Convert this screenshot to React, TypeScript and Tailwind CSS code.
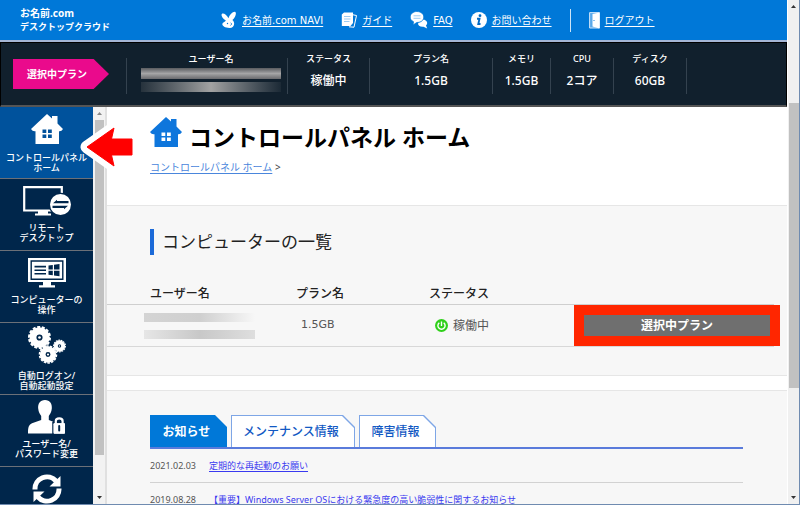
import { useState } from 'react'
import type { ReactNode } from 'react'
import clsx from 'clsx'

type IconProps = { className?: string }

function HouseIcon({ className }: IconProps) {
  return (
    <svg viewBox="0 0 32 30" className={className} fill="currentColor" aria-hidden="true">
      <path
        fillRule="evenodd"
        d="M16 0 L21 4.6 V2 H26.5 V9.6 L32 15 Q30.5 17.6 28 17.2 V30 H4.5 V17.2 Q1.5 17.6 0 15 Z M11.5 15.5 V19 H15.3 V15.5 Z M17 15.5 V19 H20.8 V15.5 Z M11.5 20.6 V24 H15.3 V20.6 Z M17 20.6 V24 H20.8 V20.6 Z"
      />
    </svg>
  )
}

function RemoteIcon() {
  return (
    <svg viewBox="0 0 48 30" className="h-[30px] w-12" aria-hidden="true">
      <path d="M1.2 1.2 H38.8 V24.5 H1.2 Z" fill="none" stroke="#fff" strokeWidth="2.2" />
      <path d="M15 25 H25 V27.5 H28 V29.5 H12 V27.5 H15 Z" fill="#fff" />
      <circle cx="37.5" cy="18.5" r="11.8" fill="#00264b" />
      <circle cx="37.5" cy="18.5" r="10.5" fill="#fff" />
      <path d="M30 17.3 L34 13.8 V15 H45.5 V17.3 Z M45 19.8 L41 23.3 V22.1 H29.5 V19.8 Z" fill="#00264b" />
    </svg>
  )
}

function ComputerIcon() {
  return (
    <svg viewBox="0 0 38 30" className="h-[30px] w-[38px]" aria-hidden="true">
      <path d="M0 0 H38 V24 H0 Z" fill="#fff" />
      <path d="M3.2 3 H34.8 V21.2 H3.2 Z" fill="none" stroke="#00264b" strokeWidth="1.4" />
      <path d="M6.5 8.6 H18 M6.5 12.2 H18 M6.5 15.8 H18" stroke="#00264b" strokeWidth="1.6" />
      <path
        d="M20.5 7.6 L24.8 7 V11.6 H20.5 Z M26 6.8 L31.5 6 V11.6 H26 Z M20.5 12.8 H24.8 V17.3 L20.5 16.7 Z M26 12.8 H31.5 V18.2 L26 17.4 Z"
        fill="#00264b"
      />
      <path d="M15 24 H23 V27.3 H27 V29.5 H11 V27.3 H15 Z" fill="#fff" />
    </svg>
  )
}

function Gear({ x, y, r }: { x: number; y: number; r: number }) {
  return (
    <g>
      <circle cx={x} cy={y} r={r * 0.58} fill="none" stroke="#fff" strokeWidth={r * 0.62} />
      <circle
        cx={x}
        cy={y}
        r={r * 0.92}
        fill="none"
        stroke="#fff"
        strokeWidth={r * 0.18}
        pathLength={28}
        strokeDasharray="1.3 0.7"
      />
      <circle cx={x} cy={y} r={r * 0.12} fill="#fff" />
    </g>
  )
}

function GearsIcon() {
  return (
    <svg viewBox="0 0 38 38" className="h-[38px] w-[38px]" aria-hidden="true">
      <Gear x={11.5} y={11.5} r={11.4} />
      <Gear x={20} y={28.5} r={9.2} />
      <Gear x={31.5} y={20} r={6.4} />
    </svg>
  )
}

function UserLockIcon() {
  return (
    <svg viewBox="0 0 38 34" className="h-[34px] w-[38px]" aria-hidden="true">
      <path
        d="M17 0 C22 0 24.3 4 23.8 8.6 C23.5 12 22 14.5 20.8 16 V20 L29 23.3 C32.5 24.8 33 28 33 33.5 H0 C0 28 .5 24.8 4 23.3 L13.2 20 V16 C12 14.5 10.5 12 10.2 8.6 C9.7 4 12 0 17 0 Z"
        fill="#fff"
      />
      <rect x="25" y="22.5" width="12.5" height="12" fill="#fff" stroke="#00264b" strokeWidth="1.5" />
      <path d="M27.8 23 V20 Q31.2 15.5 34.6 20 V23" fill="none" stroke="#00264b" strokeWidth="5" />
      <path d="M27.8 24 V21 C27.8 17.5 34.6 17.5 34.6 21 V24" fill="none" stroke="#fff" strokeWidth="2.2" />
      <rect x="25.5" y="23.2" width="11.5" height="10.3" rx="1" fill="#fff" />
      <path d="M31.2 26 V30.5" stroke="#00264b" strokeWidth="2" strokeLinecap="round" />
    </svg>
  )
}

function RefreshIcon() {
  return (
    <svg viewBox="0 0 30 30" className="h-[30px] w-[30px]" fill="none" aria-hidden="true">
      <path d="M3 15.5 A12 12 0 0 1 24 7" stroke="#fff" strokeWidth="5" />
      <path d="M27 14.5 A12 12 0 0 1 6 23" stroke="#fff" strokeWidth="5" />
      <path d="M28.5 2 V12.5 H17.5 Z M1.5 28 V17.5 H12.5 Z" fill="#fff" />
    </svg>
  )
}

function RabbitIcon() {
  return (
    <svg viewBox="0 0 16 18" className="h-[18px] w-4" aria-hidden="true">
      <path
        d="M.8 3 C2.5 1.6 5.5 4 7.5 7.2 C8.5 4 11.5 .6 14 .8 C15.8 1.4 14.8 6.5 11.4 9 C14.5 11.5 13.5 16.8 8.500 17 C4 17 1.200 15 1.300 13 C1.500 11.500 3.800 11.300 5 9.600 C2.800 8.500 -.4 5 .8 3 Z"
        fill="#fff"
      />
      <circle cx="6.5" cy="12.5" r=".7" fill="#0078d8" />
      <path d="M9.5 11.8 L11 13 L9.2 14.500" fill="none" stroke="#0078d8" strokeWidth=".7" />
    </svg>
  )
}

function GuideIcon() {
  return (
    <svg viewBox="0 0 16 16" className="h-4 w-4" aria-hidden="true">
      <path d="M10.5 2.5 L15.5 3.5 L13 15.2 L8 14.8" fill="none" stroke="#fff" strokeWidth="1" />
      <path d="M3 .5 H12 V11 L9.5 14 H.8 V2.5 Z" fill="#fff" />
      <path d="M3 4.5 H9.5 M3 7 H9.5 M3 9.5 H8.5" stroke="#9ccbf3" strokeWidth="1" />
    </svg>
  )
}

function ChatIcon() {
  return (
    <svg viewBox="0 0 18 18" className="h-[18px] w-[18px]" aria-hidden="true">
      <path
        d="M12.5 8.5 C17 8.5 18.5 12.5 16 14.500 L17.2 17.5 L13.5 15.8 C10 16.2 8 14.5 8 12.5 Z"
        fill="#fff"
      />
      <path
        d="M6.8 .5 C11 .5 13.8 3 13.8 6 C13.8 9.3 11 11.5 6.8 11.5 L3 14 L3.5 10.7 C1.3 9.8 .2 8 .2 6 C.2 3 3 .5 6.8 .5 Z"
        fill="#fff"
        stroke="#0078d8"
        strokeWidth=".8"
      />
      <path d="M3.5 4.8 H10.5 M3.5 7.3 H10.5" stroke="#9ccbf3" strokeWidth="1" />
    </svg>
  )
}

function InfoIcon() {
  return (
    <svg viewBox="0 0 16 16" className="h-4 w-4" aria-hidden="true">
      <circle cx="8" cy="8" r="8" fill="#fff" />
      <circle cx="9" cy="3.7" r="1.4" fill="#0069c4" />
      <path d="M6 6.7 H8.5 L7.3 12 H9.5" fill="none" stroke="#0069c4" strokeWidth="1.9" />
    </svg>
  )
}

function DoorIcon() {
  return (
    <svg viewBox="0 0 11 17" className="h-[17px] w-[11px]" aria-hidden="true">
      <path d="M.6 .6 H10.4 V16 H.6 Z" fill="#5aa9ea" stroke="#cfe5fa" strokeWidth="1" />
      <path d="M3.5 2 L10.5 .6 V16.4 L3.5 14.500 Z" fill="#fff" />
      <circle cx="5" cy="8.5" r=".6" fill="#0078d8" />
    </svg>
  )
}

function PowerIcon() {
  return (
    <svg viewBox="0 0 13 13" className="h-[13px] w-[13px]" fill="none" aria-hidden="true">
      <circle cx="6.5" cy="6.5" r="6.5" fill="#2fd01a" />
      <path d="M4.3 3.8 A3.6 3.6 0 1 0 8.7 3.8 M6.5 2.5 V7" stroke="#fff" strokeWidth="1.4" />
    </svg>
  )
}

function PointerArrow() {
  return (
    <svg viewBox="0 0 58 54" className="absolute left-[78px] top-3 h-[54px] w-[58px]" aria-hidden="true">
      <path
        d="M9 28 L36 9 L33.5 20 H54 V36 H33.5 L36 47 Z"
        fill="#fff"
        stroke="#fff"
        strokeWidth="13"
        strokeLinejoin="round"
      />
      <path
        d="M9 28 L36 9 L33.5 20 H54 V36 H33.5 L36 47 Z"
        fill="#f00"
        stroke="#f00"
        strokeWidth="1"
        strokeLinejoin="round"
      />
    </svg>
  )
}

function ScrollArrow({ down, className }: { down?: boolean; className?: string }) {
  return (
    <svg viewBox="0 0 5 3" className={clsx('h-[3px] w-[5px] shrink-0', className)} fill="currentColor" aria-hidden="true">
      <path d={down ? 'M0 0 H5 L2.5 3 Z' : 'M0 3 H5 L2.5 0 Z'} />
    </svg>
  )
}

const headerLinks: { label: string; icon: ReactNode }[] = [
  { label: 'お名前.com NAVI', icon: <RabbitIcon /> },
  { label: 'ガイド', icon: <GuideIcon /> },
  { label: 'FAQ', icon: <ChatIcon /> },
  { label: 'お問い合わせ', icon: <InfoIcon /> },
]

const planStats = [
  { label: 'ステータス', value: '稼働中', width: 'w-[82px]' },
  { label: 'プラン名', value: '1.5GB', width: 'w-[123px]' },
  { label: 'メモリ', value: '1.5GB', width: 'w-[58px]' },
  { label: 'CPU', value: '2コア', width: 'w-[63px]' },
  { label: 'ディスク', value: '60GB', width: 'w-[73px]' },
]

const menu: { lines: [string, string]; icon: ReactNode; padding: string }[] = [
  {
    lines: ['コントロールパネル', 'ホーム'],
    icon: <HouseIcon className="h-[30px] w-8 text-white" />,
    padding: 'pt-[7px] pb-[5px]',
  },
  { lines: ['リモート', 'デスクトップ'], icon: <RemoteIcon />, padding: 'pt-[7px] pb-[7px]' },
  { lines: ['コンピューターの', '操作'], icon: <ComputerIcon />, padding: 'pt-[7px] pb-[7px]' },
  { lines: ['自動ログオン/', '自動起動設定'], icon: <GearsIcon />, padding: 'pt-[3px] pb-[3px]' },
  { lines: ['ユーザー名/', 'パスワード変更'], icon: <UserLockIcon />, padding: 'pt-[5px] pb-[7px]' },
]

const tabs = [
  { label: 'お知らせ', width: 'w-[77px]' },
  { label: 'メンテナンス情報', width: 'w-[124px]' },
  { label: '障害情報', width: 'w-[77px]' },
]

const news = [
  { date: '2021.02.03', title: '定期的な再起動のお願い' },
  { date: '2019.08.28', title: '【重要】Windows Server OSにおける緊急度の高い脆弱性に関するお知らせ' },
]

function Header() {
  return (
    <header className="flex h-[42px] shrink-0 items-center border-b-2 border-[#a5b6d6] bg-[#0078d8] pl-5 text-white">
      <div className="w-[201px] shrink-0 font-bold">
        <div className="text-[10px] leading-[13px]">お名前.com</div>
        <div className="text-[9px] leading-[13px]">デスクトップクラウド</div>
      </div>
      <nav className="flex items-center gap-[18px] whitespace-nowrap font-['DejaVu_Sans','Noto_Sans_CJK_JP',sans-serif] text-[10px]">
        {headerLinks.map(link => (
          <a key={link.label} href="#" className="flex items-center gap-[5px]">
            {link.icon}
            <span className="underline underline-offset-2">{link.label}</span>
          </a>
        ))}
        <span className="h-[23px] w-px bg-white/80" />
        <a href="#" className="flex items-center gap-[5px]">
          <DoorIcon />
          <span className="underline underline-offset-2">ログアウト</span>
        </a>
      </nav>
    </header>
  )
}

function PlanBar() {
  return (
    <div className="flex h-[65px] shrink-0 items-start border border-b-2 border-black border-b-[#555] bg-[#11202d] text-white">
      <div className="ml-3 mt-4 flex h-[30px] w-24 shrink-0 items-center bg-[#ea0a8c] pl-[14px] text-[10px] font-bold [clip-path:polygon(0_0,84%_0,100%_50%,84%_100%,0_100%)]">
        選択中プラン
      </div>
      <dl className="ml-[17px] flex text-center">
        <div className="flex w-[161px]">
          <span className="mt-[15px] h-9 w-px shrink-0 bg-[#34424f]" />
          <div className="flex-1 pl-[14px] pr-[6px]">
            <dt className="pt-2 text-[9px] font-medium leading-4">ユーザー名</dt>
            <dd className="mt-px flex flex-col gap-[3px]">
              <span className="h-[11px] bg-linear-to-b from-[#5a5c60] via-[#a5a5a6] to-[#6a6b6e]" />
              <span className="h-[10px] bg-linear-to-r from-[#26323c] via-[#a2a2a2] to-[#1c2a36]" />
            </dd>
          </div>
        </div>
        {planStats.map(stat => (
          <div key={stat.label} className={clsx('flex', stat.width)}>
            <span className="mt-[15px] h-9 w-px shrink-0 bg-[#34424f]" />
            <div className="flex-1 whitespace-nowrap">
              <dt className="pt-2 text-[9px] font-medium leading-4">{stat.label}</dt>
              <dd className="mt-1 text-[12px] font-medium leading-5">{stat.value}</dd>
            </div>
          </div>
        ))}
        <span className="mt-[15px] h-9 w-px bg-[#34424f]" />
      </dl>
    </div>
  )
}

function Sidebar() {
  return (
    <nav className="w-[93px] shrink-0 overflow-hidden bg-[#00264b]">
      {menu.map((item, i) => (
        <a
          key={item.lines[0]}
          href="#"
          className={clsx(
            'flex h-[72px] flex-col items-center justify-between whitespace-nowrap border-b border-[#6b7078] text-center text-[9px] font-medium leading-[10px] text-white',
            item.padding,
            i === 0 && 'bg-[#00529c]',
          )}
        >
          {item.icon}
          <span>
            {item.lines[0]}
            <br />
            {item.lines[1]}
          </span>
        </a>
      ))}
      <a href="#" aria-label="再起動" className="flex h-[72px] justify-center pt-[7px]">
        <RefreshIcon />
      </a>
    </nav>
  )
}

function ComputerList() {
  return (
    <section className="border-y border-[#e6e6e6] bg-[#f7f7f7] pb-7 pt-[23px]">
      <h2 className="ml-[43px] border-l-4 border-[#1c6ad8] pl-2 text-[17px] leading-[26px] text-[#222]">
        コンピューターの一覧
      </h2>
      <div className="mr-[13px] mt-[29px]">
        <table className="w-full table-fixed border-separate border-spacing-0 text-left text-[12px]">
          <thead>
            <tr className="h-[21px] leading-5 text-[#222] [&>th]:border-b [&>th]:border-[#cfcfcf] [&>th]:p-0 [&>th]:font-medium">
              <th className="w-[187px]">
                <span className="pl-[43px]">ユーザー名</span>
              </th>
              <th className="w-[133px]">
                <span className="pl-[2px]">プラン名</span>
              </th>
              <th className="w-[153px]">
                <span className="pl-[2px]">ステータス</span>
              </th>
              <th />
            </tr>
          </thead>
          <tbody>
            <tr className="h-[42px] text-[#555] [&>td]:border-b [&>td]:border-[#d8d8d8] [&>td]:p-0">
              <td>
                <div className="ml-[37px] flex w-[111px] flex-col gap-2">
                  <span className="h-[9px] bg-linear-to-r from-[#d4d4d4] via-[#cfcfcf] to-[#f7f7f7]" />
                  <span className="h-[9px] bg-linear-to-r from-[#e6e6e6] via-[#c8c8c8] to-[#dedede]" />
                </div>
              </td>
              <td className="font-['DejaVu_Sans',sans-serif] text-[11px]">
                <span className="pl-[7px]">1.5GB</span>
              </td>
              <td>
                <span className="flex items-center gap-[5px] pl-2">
                  <PowerIcon />
                  稼働中
                </span>
              </td>
              <td>
                <button
                  type="button"
                  className="mx-1 block h-[21px] w-[calc(100%-8px)] bg-[#6f6f6f] text-[12px] font-bold leading-5 text-white outline-10 outline-solid outline-[#ff2600]"
                >
                  選択中プラン
                </button>
              </td>
            </tr>
          </tbody>
        </table>
      </div>
    </section>
  )
}

function News() {
  const [active, setActive] = useState(0)

  return (
    <section className="mt-[14px] flex-1 border-t border-[#e6e6e6] bg-[#f7f7f7] pl-[43px] pr-[44px] pt-6">
      <div role="tablist" className="flex gap-1 border-b-2 border-[#5a7bdb]">
        {tabs.map((tab, i) => (
          <button
            key={tab.label}
            type="button"
            role="tab"
            aria-selected={i === active}
            onClick={() => setActive(i)}
            className={clsx(
              'flex h-8 px-px pt-px text-[12px] [clip-path:polygon(0_0,calc(100%-12px)_0,100%_12px,100%_100%,0_100%)]',
              tab.width,
              i === active ? 'bg-[#0078d8] font-bold text-white' : 'bg-[#7ea6e6] font-medium text-[#1259c3]',
            )}
          >
            <span
              className={clsx(
                'flex h-full w-full items-center justify-center whitespace-nowrap pr-1 [clip-path:polygon(0_0,calc(100%-12px)_0,100%_12px,100%_100%,0_100%)]',
                i !== active && 'bg-white',
              )}
            >
              {tab.label}
            </span>
          </button>
        ))}
      </div>
      <ul className="text-[9px]">
        {news.map(item => (
          <li key={item.date} className="flex h-[34px] items-center gap-2 whitespace-nowrap border-b border-[#d2d2d2]">
            <time className="w-[51px] text-[#555]">{item.date}</time>
            <a href="#" className="text-[#3a3af0] underline underline-offset-2">
              {item.title}
            </a>
          </li>
        ))}
      </ul>
    </section>
  )
}

export default function App() {
  return (
    <div
      lang="ja"
      className="flex h-screen overflow-hidden border-b border-r border-[#6f8bb0] bg-white font-['Noto_Sans','Noto_Sans_CJK_JP',sans-serif]"
    >
      <div className="flex min-w-0 flex-1 flex-col">
        <Header />
        <PlanBar />
        <div className="relative flex min-h-0 flex-1">
          <Sidebar />
          <div className="flex w-[14px] shrink-0 flex-col items-center border-r-2 border-[#e0e0e0] bg-[#f2f2f2] py-[5px]">
            <ScrollArrow className="text-[#888]" />
            <div className="mb-[41px] mt-[5px] w-[9px] flex-1 bg-[#c1c1c1]" />
            <ScrollArrow down className="text-[#333]" />
          </div>
          <main className="flex min-w-0 flex-1 flex-col overflow-hidden">
            <div className="shrink-0 px-[43px] pb-7 pt-[10px]">
              <div className="flex items-start gap-[7px]">
                <HouseIcon className="h-[30px] w-8 shrink-0 text-[#0e76dc]" />
                <h1 className="whitespace-nowrap text-[23px] font-bold leading-10 text-black">
                  コントロールパネル ホーム
                </h1>
              </div>
              <div className="text-[10px] leading-5 text-[#444]">
                <a href="#" className="text-[#4a86dc] underline underline-offset-2">
                  コントロールパネル ホーム
                </a>{' '}
                &gt;
              </div>
            </div>
            <ComputerList />
            <News />
          </main>
          <PointerArrow />
        </div>
      </div>
      <div className="ml-px flex w-[11px] shrink-0 flex-col items-center bg-[#f0f0f0] py-[5px]">
        <ScrollArrow className="text-[#333]" />
        <div className="mb-[108px] mt-[95px] w-[10px] flex-1 bg-[#c1c1c1]" />
        <ScrollArrow down className="text-[#333]" />
      </div>
    </div>
  )
}
